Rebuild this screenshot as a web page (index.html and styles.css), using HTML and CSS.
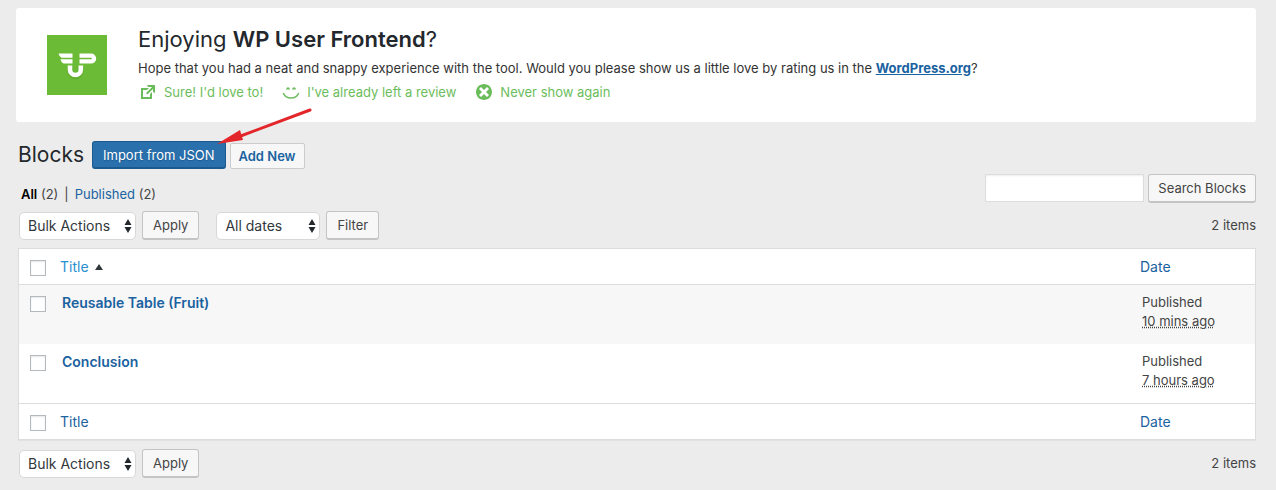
FILE: index.html
```html
<!DOCTYPE html>
<html lang="en">
  <head>
    <meta charset="utf-8">
    <title>Blocks</title>
    <link rel="stylesheet" href="styles.css">
  </head>
  <body>
    <div class="notice">
      <svg class="notice-logo" width="60" height="60" viewBox="0 0 60 60" aria-hidden="true">
        <rect width="60" height="60" fill="#6cbb36" />
        <path class="logo-shadow" d="M23 32v4a5.3 5.3 0 0 0 10.600 0v-4" fill="none" stroke="#5aa329" stroke-width="6" />
        <path d="M11.500 18.500H25.500V22.800H14.500Q12.300 21.500 11.500 18.500zM13.500 24.300H25.500V28.500H16.500Q14 27.500 13.500 24.300z" fill="#fff" />
        <path d="M32.500 20.700H44a3 2.800 0 0 1 0 5.700H32.500" fill="none" stroke="#fff" stroke-width="4.300" />
        <path d="M23 30.500v4.200a5.400 5.300 0 0 0 10.800 0v-4.200" fill="none" stroke="#fff" stroke-width="4.600" />
      </svg>
      <div class="notice-text">
        <h2>Enjoying <strong>WP User Frontend</strong>?</h2>
        <p>Hope that you had a neat and snappy experience with the tool. Would you please show us a little love by rating us in the <a href="#"><strong>WordPress.org</strong></a>?</p>
        <ul class="notice-links">
          <li>
            <a href="#">
              <svg width="20" height="20" viewBox="0 0 20 20"><path d="M9 3h8v8l-2-1V6.920l-5.600 5.590-1.410-1.410L14.080 5H10zm3 12v-3l2-2v7H3V6h8L9 8H5v7h7z" /></svg>
              Sure! I'd love to!
            </a>
          </li>
          <li>
            <a href="#">
              <svg width="20" height="20" viewBox="0 0 20 20"><path d="M7 5.200q1.700 0 2 2.300H5q.3-2.300 2-2.300zM13 5.200q1.700 0 2 2.300h-4q.3-2.300 2-2.300z" /><path d="M2.500 11.500a8 7 0 0 0 15 0" fill="none" stroke="#6bbd5c" stroke-width="1.500" stroke-linecap="round" /></svg>
              I've already left a review
            </a>
          </li>
          <li>
            <a href="#">
              <svg width="20" height="20" viewBox="0 0 20 20"><path d="M10 2c4.420 0 8 3.580 8 8s-3.580 8-8 8-8-3.580-8-8 3.580-8 8-8zm5 11l-3-3 3-3-2-2-3 3-3-3-2 2 3 3-3 3 2 2 3-3 3 3z" /></svg>
              Never show again
            </a>
          </li>
        </ul>
      </div>
    </div>

    <main class="wrap">
      <div class="page-heading">
        <h1>Blocks</h1>
        <button type="button" class="button-primary">Import from JSON</button>
        <a href="#" class="page-title-action">Add New</a>
        <svg class="arrow" width="100" height="42" viewBox="0 0 100 42" aria-hidden="true">
          <path d="M94 4L22 31" fill="none" stroke="#e3262a" stroke-width="3" stroke-linecap="round" />
          <path d="M1 38L24 24l3 10z" fill="#e3262a" />
        </svg>
      </div>

      <div class="filter-row">
        <ul class="subsubsub">
          <li><a href="#" class="current">All</a> (2)</li>
          <li class="sep">|</li>
          <li><a href="#">Published</a> (2)</li>
        </ul>
        <form class="search-box">
          <input type="search" aria-label="Search Blocks">
          <button type="button" class="button">Search Blocks</button>
        </form>
      </div>

      <div class="tablenav">
        <div class="select">
          <select class="bulk" aria-label="Select bulk action">
            <option>Bulk Actions</option>
          </select>
          <svg width="8" height="14" viewBox="0 0 8 14"><path d="M4 0l3.500 6h-7zM4 14L.5 8h7z" /></svg>
        </div>
        <button type="button" class="button">Apply</button>
        <div class="select dates-wrap">
          <select class="dates" aria-label="Filter by date">
            <option>All dates</option>
          </select>
          <svg width="8" height="14" viewBox="0 0 8 14"><path d="M4 0l3.500 6h-7zM4 14L.5 8h7z" /></svg>
        </div>
        <button type="button" class="button">Filter</button>
        <span class="count">2 items</span>
      </div>

      <table class="list-table">
        <thead>
          <tr>
            <th class="check"><input type="checkbox" aria-label="Select all"></th>
            <th>
              <a href="#" class="sorted">Title<svg width="8" height="6" viewBox="0 0 8 6"><path d="M4 0l4 6H0z" /></svg></a>
            </th>
            <th class="date"><a href="#">Date</a></th>
          </tr>
        </thead>
        <tbody>
          <tr>
            <td class="check"><input type="checkbox" aria-label="Select Reusable Table (Fruit)"></td>
            <td><a href="#" class="row-title">Reusable Table (Fruit)</a></td>
            <td class="date">Published<br><abbr>10 mins ago</abbr></td>
          </tr>
          <tr>
            <td class="check"><input type="checkbox" aria-label="Select Conclusion"></td>
            <td><a href="#" class="row-title">Conclusion</a></td>
            <td class="date">Published<br><abbr>7 hours ago</abbr></td>
          </tr>
        </tbody>
        <tfoot>
          <tr>
            <th class="check"><input type="checkbox" aria-label="Select all"></th>
            <th><a href="#">Title</a></th>
            <th class="date"><a href="#">Date</a></th>
          </tr>
        </tfoot>
      </table>

      <div class="tablenav">
        <div class="select">
          <select class="bulk" aria-label="Select bulk action">
            <option>Bulk Actions</option>
          </select>
          <svg width="8" height="14" viewBox="0 0 8 14"><path d="M4 0l3.500 6h-7zM4 14L.5 8h7z" /></svg>
        </div>
        <button type="button" class="button">Apply</button>
        <span class="count">2 items</span>
      </div>
    </main>
  </body>
</html>
```

FILE: styles.css
```css
* {
  box-sizing: border-box;
}

body {
  margin: 0;
  padding: 8px 20px 0 16px;
  background: #ececec;
  color: #444;
  font-family: Inter, Roboto, sans-serif;
  font-size: 13px;
  line-height: 19px;
}

h1,
h2,
p,
ul {
  margin: 0;
  padding: 0;
}

ul {
  display: flex;
  list-style: none;
}

a {
  color: #1a62a0;
  text-decoration: none;
}

button,
input,
select {
  margin: 0;
  font-family: inherit;
}

/* Review notice */
.notice {
  display: flex;
  gap: 31px;
  padding: 17px 31px 20px;
  background: #fff;
  border-radius: 3px;
}

.notice-logo {
  flex: none;
  margin-top: 10px;
}

.logo-shadow {
  opacity: 0.6;
}

.notice h2 {
  color: #23282d;
  font-size: 22px;
  font-weight: 400;
  line-height: 28px;
}

.notice h2 strong {
  font-weight: 600;
}

.notice p {
  margin-top: 6px;
  color: #333;
}

.notice p a {
  text-decoration: underline;
}

.notice-links {
  gap: 18px;
  margin-top: 4px;
}

.notice-links a {
  display: flex;
  align-items: center;
  gap: 6px;
  color: #6bbd5c;
}

.notice-links svg {
  fill: #6bbd5c;
}

/* Page heading */
.wrap {
  margin-left: 2px;
}

.page-heading {
  position: relative;
  display: flex;
  align-items: center;
  margin-top: 19px;
}

.page-heading h1 {
  margin-right: 8px;
  color: #23282d;
  font-size: 21px;
  font-weight: 400;
  line-height: 28px;
}

.arrow {
  position: absolute;
  left: 198px;
  top: -35px;
}

.button-primary {
  height: 28px;
  padding: 0 10px;
  border: 1px solid #1b5a8e;
  border-bottom-width: 2px;
  border-radius: 3px;
  background: #2a70ad;
  color: #fff;
  font-size: 13px;
  text-shadow: 0 1px 1px #1b5a8e;
}

.page-title-action {
  margin: 2px 0 0 4px;
  padding: 3px 8px;
  border: 1px solid #ccc;
  border-radius: 2px;
  background: #f7f7f7;
  font-weight: 600;
  line-height: 18px;
}

/* Views and search */
.filter-row {
  display: flex;
  justify-content: space-between;
  align-items: center;
  margin-top: 4px;
}

.subsubsub {
  margin: 12px 0 0 3px;
}

.subsubsub .sep {
  margin: 0 6px;
}

.subsubsub .current {
  color: #000;
  font-weight: 600;
}

.search-box {
  display: flex;
  gap: 4px;
}

.search-box input {
  width: 159px;
  height: 28px;
  border: 1px solid #ddd;
  background: #fff;
  box-shadow: inset 0 1px 2px rgba(0, 0, 0, 0.07);
}

.button {
  height: 29px;
  padding: 0 10px;
  border: 1px solid #c4c4c4;
  border-bottom-width: 2px;
  border-radius: 3px;
  background: #f7f7f7;
  color: #444;
  font-size: 13px;
}

.search-box .button {
  padding: 0 9px;
}

/* Bulk actions */
.tablenav {
  display: flex;
  align-items: center;
  gap: 6px;
  margin: 7px 0 8px 1px;
}

.select {
  position: relative;
}

.select select {
  display: block;
  height: 28px;
  padding: 0 8px;
  border: 1px solid #d8d8d8;
  border-radius: 5px;
  appearance: none;
  background: #fff;
  color: #32373c;
  font-size: 14px;
}

.select .bulk {
  width: 117px;
}

.select .dates {
  width: 104px;
}

.select svg {
  position: absolute;
  right: 4px;
  top: 7px;
  fill: #23282d;
  pointer-events: none;
}

.dates-wrap {
  margin-left: 11px;
}

.count {
  margin-left: auto;
}

/* Posts table */
.list-table {
  width: 100%;
  margin-bottom: 9px;
  border: 1px solid #ddd;
  border-spacing: 0;
  background: #fff;
  box-shadow: 0 1px 1px rgba(0, 0, 0, 0.04);
  table-layout: fixed;
}

.list-table th {
  padding: 8px 10px;
  font-size: 14px;
  font-weight: 400;
  text-align: left;
}

.list-table td {
  height: 59px;
  padding: 8px 12px;
  vertical-align: top;
}

.list-table thead th {
  border-bottom: 1px solid #ddd;
}

.list-table tfoot th {
  border-top: 1px solid #ddd;
}

.list-table tbody tr:nth-child(odd) {
  background: #f7f7f7;
}

.list-table .check {
  width: 31px;
  padding: 11px 0 0 11px;
  vertical-align: top;
}

.list-table .date {
  width: 125px;
}

.list-table input {
  display: block;
  width: 16px;
  height: 16px;
  border: 1px solid #b4b9be;
  appearance: none;
  background: #fff;
  box-shadow: inset 0 1px 2px rgba(0, 0, 0, 0.1);
}

.sorted {
  display: flex;
  align-items: center;
  gap: 6px;
  color: #2a8fd0;
}

.sorted svg {
  fill: #32373c;
}

.row-title {
  font-size: 14px;
  font-weight: 600;
}

abbr {
  text-decoration: underline dotted;
}
```
